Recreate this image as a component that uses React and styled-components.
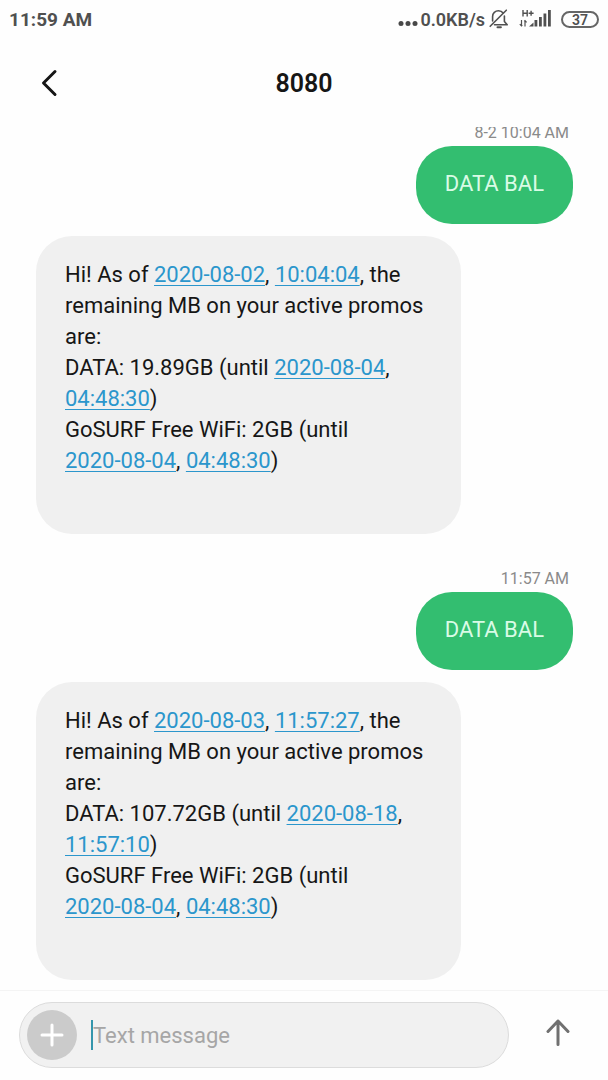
import React, { useState } from "react";
import styled, { createGlobalStyle, css } from "styled-components";

const GlobalStyle = createGlobalStyle`
	* {
		box-sizing: border-box;
	}
	body {
		margin: 0;
		background-color: #fefefe;
		font-family: Roboto, "Liberation Sans", sans-serif;
	}
`;

const Container = styled.div`
	display: flex;
	flex-direction: column;
	height: 100vh;
	color: #161616;
`;

const StatusBar = styled.div`
	display: flex;
	align-items: center;
	justify-content: space-between;
	flex-shrink: 0;
	height: 38px;
	padding: 0 9px;
	font-size: 19px;
	font-weight: 700;
	color: #505050;
`;

const StatusIcons = styled.div`
	display: flex;
	align-items: center;
	font-size: 18px;
	font-weight: 600;
	gap: 4px;
`;

const Speed = styled.span`
	display: flex;
	align-items: center;
	gap: 2px;
`;

const Signal = styled.div`
	display: flex;
	margin: 0 4px 0 6px;
`;

const Battery = styled.span`
	width: 38px;
	height: 17px;
	border: 2px solid #666;
	border-radius: 9px;
	font-size: 14px;
	line-height: 14px;
	text-align: center;
`;

const Header = styled.header`
	display: grid;
	grid-template-columns: 64px 1fr 64px;
	align-items: center;
	height: 89px;
	padding: 1px 17px 0;
	flex-shrink: 0;
`;

const Title = styled.h1`
	margin: 0;
	font-size: 25px;
	font-weight: 600;
	text-align: center;
`;

const IconButton = styled.button`
	display: flex;
	align-items: center;
	justify-content: center;
	width: 64px;
	height: 64px;
	padding: 0;
	border: none;
	background-color: transparent;
	cursor: pointer;
`;

const Messages = styled.main`
	flex: 1;
	min-height: 0;
	display: flex;
	flex-direction: column;
	justify-content: flex-end;
	overflow: hidden;
	padding: 0 35px 10px 36px;
`;

const Time = styled.time`
	align-self: flex-end;
	flex-shrink: 0;
	margin: 35px 4px 3px 0;
	font-size: 16px;
	line-height: 20px;
	color: #8a8a8a;
`;

const Bubble = styled.div`
	flex-shrink: 0;
	border-radius: 36px;
	font-size: 22px;
	line-height: 31px;
	${({ $sent }) =>
		$sent
			? css`
					align-self: flex-end;
					margin-bottom: 12px;
					padding: 22px 29px 25px;
					background-color: #33be70;
					color: #d9fbe6;
			  `
			: css`
					align-self: flex-start;
					width: 425px;
					max-width: 80%;
					padding: 23px 29px 58px;
					background-color: #f0f0f0;
					white-space: pre-wrap;
			  `}
`;

const Link = styled.a`
	color: #2b96cc;
	text-decoration: underline;
	text-decoration-thickness: 1px;
	text-underline-offset: 3px;
	white-space: nowrap;
`;

const Composer = styled.form`
	display: flex;
	align-items: center;
	flex-shrink: 0;
	padding: 11px 18px 12px 19px;
	border-top: 1px solid #f4f4f4;
`;

const Field = styled.div`
	flex: 1;
	display: flex;
	align-items: center;
	height: 66px;
	padding: 0 7px;
	border: 1px solid #dcdcdc;
	border-radius: 33px;
	background-color: #f1f1f1;
`;

const AddButton = styled.button`
	display: flex;
	align-items: center;
	justify-content: center;
	width: 50px;
	height: 50px;
	padding: 0;
	border: none;
	border-radius: 50%;
	background-color: #cbcbcb;
	cursor: pointer;
`;

const Caret = styled.span`
	width: 2px;
	height: 30px;
	margin-left: 14px;
	background-color: #3596ac;
`;

const Input = styled.input`
	flex: 1;
	min-width: 0;
	padding: 0;
	border: none;
	outline: none;
	background-color: transparent;
	font-family: inherit;
	font-size: 22px;
	color: #161616;
	caret-color: #3596ac;
	&::placeholder {
		color: #a6a6a6;
		opacity: 1;
	}
`;

const SendButton = styled(IconButton)`
	margin-left: 17px;
`;

const threads = [
	{
		time: "8-2 10:04 AM",
		date: "2020-08-02",
		clock: "10:04:04",
		data: "19.89GB",
		untilDate: "2020-08-04",
		untilClock: "04:48:30",
	},
	{
		time: "11:57 AM",
		date: "2020-08-03",
		clock: "11:57:27",
		data: "107.72GB",
		untilDate: "2020-08-18",
		untilClock: "11:57:10",
	},
];

const DateLink = ({ children }) => <Link href="#">{children}</Link>;

const Balance = ({ item }) => (
	<Bubble>
		Hi! As of <DateLink>{item.date}</DateLink>,{" "}
		<DateLink>{item.clock}</DateLink>, the remaining MB on your active promos
		are:
		{"\n"}DATA: {item.data} (until <DateLink>{item.untilDate}</DateLink>,{" "}
		<DateLink>{item.untilClock}</DateLink>){"\n"}
		GoSURF Free WiFi: 2GB (until <DateLink>2020-08-04</DateLink>,{" "}
		<DateLink>04:48:30</DateLink>)
	</Bubble>
);

const Dots = () => (
	<svg width="20" height="20" viewBox="0 0 20 20" fill="#484848">
		<circle cx="3" cy="14.5" r="2.5" />
		<circle cx="10" cy="14.5" r="2.5" />
		<circle cx="17" cy="14.5" r="2.5" />
	</svg>
);

const BellOff = () => (
	<svg
		width="20"
		height="20"
		viewBox="0 0 20 20"
		fill="none"
		stroke="#505050"
		strokeWidth="1.6"
		strokeLinecap="round"
		strokeLinejoin="round"
	>
		<path d="M3.6 12V7.5C3.6 4 6.2 1.8 9.5 1.8c2 0 3.6.8 4.6 2.2" />
		<path d="M15.4 7v5.5l2.8 3.3H5.5" />
		<path d="M8.5 18.3h3.4" strokeWidth="2" />
		<path d="M1.2 17.3L17.3 1.2" />
	</svg>
);

const SignalIcon = () => (
	<svg width="34" height="20" viewBox="0 0 34 20" fill="#505050">
		<path
			d="M4 1v6.5M8.2 1v6.5M4 4.2h4.2M9.6 4.2h5M12.1 1.7v5"
			stroke="#505050"
			strokeWidth="1.4"
			fill="none"
		/>
		<path
			d="M2.5 11v6M.8 15.2L2.5 17l.8-.8M6 17.5v-6M7.6 13.3L6 11.5l-.8.8"
			stroke="#505050"
			strokeWidth="1.2"
			fill="none"
		/>
		<path d="M10 17.5L14.5 13.5v4z" />
		<rect x="15.5" y="11" width="2.8" height="6.5" />
		<rect x="20" y="8" width="2.8" height="9.5" />
		<rect x="24.5" y="4.5" width="2.8" height="13" />
		<rect x="29" y="1" width="2.8" height="16.5" />
	</svg>
);

const App = () => {
	const [text, setText] = useState("");

	return (
		<Container>
			<GlobalStyle />
			<StatusBar>
				<span>11:59 AM</span>
				<StatusIcons>
					<Speed>
						<Dots />
						0.0KB/s
					</Speed>
					<BellOff />
					<Signal>
						<SignalIcon />
					</Signal>
					<Battery>37</Battery>
				</StatusIcons>
			</StatusBar>
			<Header>
				<IconButton aria-label="Back">
					<svg width="18" height="28" viewBox="0 0 18 28" fill="none">
						<path
							d="M15 2.5L3.5 14L15 25.5"
							stroke="#161616"
							strokeWidth="3"
							strokeLinecap="round"
							strokeLinejoin="round"
						/>
					</svg>
				</IconButton>
				<Title>8080</Title>
			</Header>
			<Messages>
				{threads.map((item) => (
					<React.Fragment key={item.time}>
						<Time>{item.time}</Time>
						<Bubble $sent>DATA BAL</Bubble>
						<Balance item={item} />
					</React.Fragment>
				))}
			</Messages>
			<Composer onSubmit={(e) => e.preventDefault()}>
				<Field>
					<AddButton type="button" aria-label="Add attachment">
						<svg width="24" height="24" viewBox="0 0 24 24" fill="none">
							<path
								d="M12 2v20M2 12h20"
								stroke="#fff"
								strokeWidth="3"
								strokeLinecap="round"
							/>
						</svg>
					</AddButton>
					{!text && <Caret />}
					<Input
						aria-label="Text message"
						placeholder="Text message"
						value={text}
						onChange={(e) => setText(e.target.value)}
					/>
				</Field>
				<SendButton type="submit" aria-label="Send">
					<svg width="26" height="32" viewBox="0 0 26 32" fill="none">
						<path
							d="M13 25.5V2M3 12.5L13 2L23 12.5"
							stroke="#707070"
							strokeWidth="3"
							strokeLinecap="round"
							strokeLinejoin="round"
						/>
					</svg>
				</SendButton>
			</Composer>
		</Container>
	);
};

export default App;
